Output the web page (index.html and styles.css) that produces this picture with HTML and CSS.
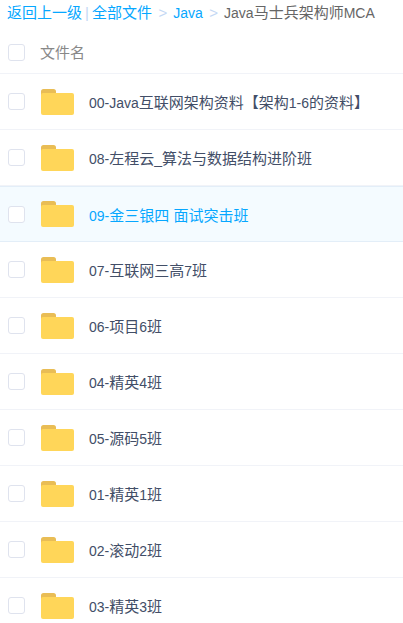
FILE: index.html
```html
<!DOCTYPE html>
<html lang="zh-CN">
  <head>
    <meta charset="UTF-8" />
    <title>文件列表</title>
    <link rel="stylesheet" href="styles.css">
  </head>
  <body>
    <svg class="defs" width="0" height="0">
      <symbol id="folder" viewBox="0 0 33 26">
        <path d="M0 2.5A2.5 2.5 0 0 1 2.5 0h10A2.5 2.5 0 0 1 15 2.5V6H0z" fill="#e9bd55"/>
        <path d="M0 6a2 2 0 0 1 2-2h29a2 2 0 0 1 2 2v18a2 2 0 0 1-2 2H2a2 2 0 0 1-2-2z" fill="#ffd659"/>
      </symbol>
    </svg>
    <div class="crumbs">
      <a>返回上一级</a><span class="bar">|</span><a>全部文件</a><span class="gt">&gt;</span><a class="lat">Java</a><span class="gt">&gt;</span><span class="current"><span class="lat">Java</span>马士兵架构师<span class="lat">MCA</span></span>
    </div>
    <div class="head-row">
      <span class="check"></span>
      <span class="head-name">文件名</span>
    </div>
    <ul class="list">
      <li class="row"><span class="check"></span><svg class="folder"><use href="#folder"/></svg><span class="name"><span class="lat">00-Java</span>互联网架构资料【架构<span class="lat">1-6</span>的资料】</span></li>
      <li class="row"><span class="check"></span><svg class="folder"><use href="#folder"/></svg><span class="name"><span class="lat">08-</span>左程云<span class="lat">_</span>算法与数据结构进阶班</span></li>
      <li class="row active"><span class="check"></span><svg class="folder"><use href="#folder"/></svg><span class="name"><span class="lat">09-</span>金三银四 面试突击班</span></li>
      <li class="row"><span class="check"></span><svg class="folder"><use href="#folder"/></svg><span class="name"><span class="lat">07-</span>互联网三高<span class="lat">7</span>班</span></li>
      <li class="row"><span class="check"></span><svg class="folder"><use href="#folder"/></svg><span class="name"><span class="lat">06-</span>项目<span class="lat">6</span>班</span></li>
      <li class="row"><span class="check"></span><svg class="folder"><use href="#folder"/></svg><span class="name"><span class="lat">04-</span>精英<span class="lat">4</span>班</span></li>
      <li class="row"><span class="check"></span><svg class="folder"><use href="#folder"/></svg><span class="name"><span class="lat">05-</span>源码<span class="lat">5</span>班</span></li>
      <li class="row"><span class="check"></span><svg class="folder"><use href="#folder"/></svg><span class="name"><span class="lat">01-</span>精英<span class="lat">1</span>班</span></li>
      <li class="row"><span class="check"></span><svg class="folder"><use href="#folder"/></svg><span class="name"><span class="lat">02-</span>滚动<span class="lat">2</span>班</span></li>
      <li class="row"><span class="check"></span><svg class="folder"><use href="#folder"/></svg><span class="name"><span class="lat">03-</span>精英<span class="lat">3</span>班</span></li>
    </ul>
  </body>
</html>
```

FILE: styles.css
```css
html, body {
  height: 623px;
  overflow: hidden;
}
body {
  margin: 0;
  background-color: #fff;
  font-family: "Liberation Sans", Arial, "Noto Sans CJK SC", sans-serif;
  font-size: 15px;
  color: #424e67;
}
.defs {
  position: absolute;
}
.lat {
  font-size: 14px;
}
.crumbs {
  display: flex;
  align-items: baseline;
  height: 26px;
  padding-left: 7px;
  line-height: 25px;
  white-space: nowrap;
  box-sizing: border-box;
  color: #06a7ff;
}
.bar {
  margin: 0 3px;
  color: #c4d8f4;
}
.gt {
  margin: 0 6px 0 6.5px;
  color: #c4d8f4;
}
.current {
  color: #666;
}
.head-row {
  display: flex;
  align-items: center;
  height: 48px;
  padding: 5px 0 0 8px;
  border-bottom: 1px solid #f1f3f8;
  box-sizing: border-box;
}
.head-name {
  margin: 0 0 2px 15px;
  color: #888;
}
.check {
  width: 15px;
  height: 15px;
  border: 1px solid #dfe3ee;
  border-radius: 3px;
  background-color: #fff;
  flex-shrink: 0;
}
.list {
  margin: 0;
  padding: 0;
  list-style: none;
}
.row {
  display: flex;
  align-items: center;
  height: 56px;
  padding-left: 8px;
  border-bottom: 1px solid #f1f3f8;
  box-sizing: border-box;
}
.folder {
  width: 33px;
  height: 26px;
  margin-left: 16px;
  flex-shrink: 0;
}
.name {
  margin-left: 15px;
  white-space: nowrap;
}
.row.active {
  background-color: #f4fbff;
  border-top: 1px solid #e3eef8;
  border-bottom-color: #e3eef8;
}
.row.active .name {
  color: #06a7ff;
}
```
